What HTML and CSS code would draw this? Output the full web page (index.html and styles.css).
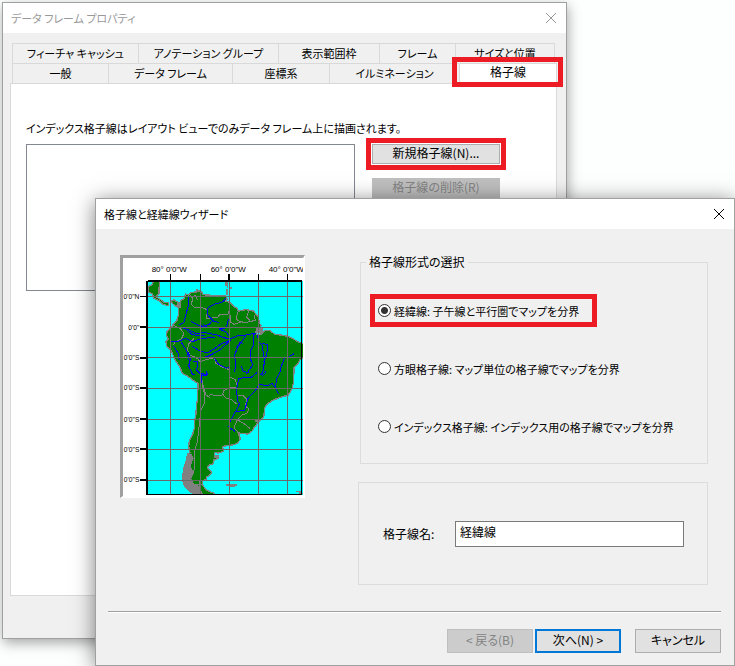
FILE: index.html
```html
<!DOCTYPE html>
<html lang="ja">
<head>
<meta charset="utf-8">
<title>データ フレーム プロパティ</title>
<link rel="stylesheet" href="styles.css">
</head>
<body>
<main class="desktop">
  <section class="window properties">
    <header class="titlebar inactive">
      <span>データ フレーム プロパティ</span>
      <button class="close" aria-label="閉じる"><svg width="12" height="12" viewBox="0 0 12 12"><path d="M1 1L11 11M11 1L1 11"/></svg></button>
    </header>
    <div class="properties-body">
      <div class="tabs" role="tablist">
        <div class="tab-row upper">
          <button class="tab" role="tab">フィーチャ キャッシュ</button>
          <button class="tab" role="tab">アノテーション グループ</button>
          <button class="tab" role="tab">表示範囲枠</button>
          <button class="tab" role="tab">フレーム</button>
          <button class="tab" role="tab">サイズと位置</button>
        </div>
        <div class="tab-row lower">
          <button class="tab" role="tab">一般</button>
          <button class="tab" role="tab">データ フレーム</button>
          <button class="tab" role="tab">座標系</button>
          <button class="tab" role="tab">イルミネーション</button>
          <button class="tab active" role="tab" aria-selected="true">格子線</button>
        </div>
      </div>
      <div class="panel" role="tabpanel">
        <p class="note">インデックス格子線はレイアウト ビューでのみデータ フレーム上に描画されます。</p>
        <div class="grid-list">
          <div class="listbox" role="listbox" aria-label="格子線"></div>
          <div class="actions">
            <div class="marked-button"><button class="button">新規格子線(N)...</button></div>
            <button class="button" disabled>格子線の削除(R)</button>
          </div>
        </div>
      </div>
    </div>
  </section>

  <section class="window wizard">
    <header class="titlebar">
      <span>格子線と経緯線ウィザード</span>
      <button class="close" aria-label="閉じる"><svg width="12" height="12" viewBox="0 0 12 12"><path d="M1 1L11 11M11 1L1 11"/></svg></button>
    </header>
    <form class="wizard-body">
      <div class="content">
        <div class="preview">
          <svg width="180" height="238" viewBox="39 39 540 714" shape-rendering="crispEdges">
            <rect x="39" y="39" width="540" height="714" fill="#fff"/>
            <rect x="110" y="108" width="469" height="642" fill="#0ff"/>
            <g fill="#008000" stroke="#808080" stroke-width="4" stroke-linejoin="bevel">
              <path d="M148 110L147 145L138 155L150 163L163 172L176 174L176 182L158 178L146 166L132 160L128 148L115 140L115 124L126 119L130 110Z"/>
              <path d="M183 168L192 164L203 172L208 180L211 168L224 160L226 147L236 150L243 143L256 143L266 136L274 140L280 149L300 151L320 153L346 153L352 161L347 168L362 173L370 184L380 190L386 198L408 194L430 198L440 210L446 216L447 232L453 242L447 256L436 262L443 270L456 266L466 256L480 257L494 268L512 270L532 274L548 280L562 290L581 296V338L569 345L562 358L552 367L551 410L546 432L535 450L518 455L490 465L475 475L465 486L463 500L461 516L446 530L432 548L426 558L414 567L400 566L385 564L391 582L383 594L368 600L338 604L340 619L326 624L314 623L315 638L327 637L324 641L312 644L310 656L299 660L291 668L298 675L306 680L302 688L290 696L288 703L277 708L279 722L288 734L300 740L313 745L313 748H258L244 742L230 731L221 717L217 698L220 680L224 660L230 646L232 628L240 624L236 604L238 586L248 570L253 550L254 526L258 508L259 484L263 460L264 416L250 406L234 394L216 384L210 366L200 352L190 332L182 315L170 304L168 290L175 284L170 272L171 260L182 250L188 240L200 228L205 212L205 182L197 184L188 176Z"/>
            </g>
            <g fill="#808080">
              <path d="M232 628L244 626L250 640L242 664L252 684L244 700L252 716L270 724L278 746L258 748L230 734L218 716L218 680Z"/>
              <path d="M348 718H382V722H376V726H356V724H348ZM314 631H328V640H314ZM558 738H572V744H579V748H566V742H558ZM252 137H258V132H264V137H275V142H252ZM284 148H300V153H284ZM346 112H354V128H350V122H346ZM348 132H354V150H348ZM358 126H365V132H358ZM436 522H448V532H436ZM438 246H460V264H438ZM202 174H212V188H202Z"/>
            </g>
            <g fill="none" stroke="#808080" stroke-width="3" stroke-linejoin="bevel">
              <path d="M241 150L247 162L245 178L252 186H270M244 158L257 150L262 166M270 186L292 194L290 220L322 218L328 210L354 208L360 188M362 210L360 230L372 238L396 230L402 234L436 226L432 210M384 200L378 222L394 232M416 198L410 216L420 226M190 240L212 252L222 266L214 282L196 290L190 300M252 280L236 296L232 314L240 330L262 340L270 350L272 380L277 412L288 450L300 458M270 350L296 342L314 338L316 354L336 366L358 374L360 396L376 404L382 424M292 456L302 449L320 452L336 450L342 436L358 428L378 426M338 446L346 458L364 464L382 478M384 450H398L410 462L406 484L416 490L412 504L396 510L382 524L372 548L384 562M382 524L402 536L420 550M276 418L284 450L282 478L272 498L270 520L266 556L262 590L254 618L252 640L255 668L244 694M250 719H278M268 704V740M238 590L250 560"/>
              <path d="M240 640H252M236 655H246M240 675H250"/>
            </g>
            <g fill="none" stroke="#00f" stroke-width="3" stroke-linejoin="bevel">
              <path d="M236 152L234 186L226 214L222 232L208 240M346 160L340 170L312 178L294 188L292 208L302 220L310 228L326 232M244 230L264 240L278 244L298 238L306 228M278 238L292 246H312M360 216L352 232L350 248L326 252L348 260L360 278M208 246L234 254L260 266L280 262L320 270L342 278L360 282L388 270H408L436 264M232 256L246 268L266 272L286 270M180 290L202 290L228 280L248 290L270 282L314 276M190 302L204 324L208 346M214 292L230 318L238 348M246 304L270 318L292 324L318 308L334 296L360 286M266 340L294 334L328 316L348 298L364 284M314 340L326 358L350 370L358 366M374 380L378 348L372 334L382 310L406 274M378 310L390 292L400 296M410 386L428 360L420 338L422 316L432 298L430 270L436 264M394 362L398 378L416 384M442 270L446 290L456 300L464 346L458 384L452 390M456 294L474 300L470 330L460 352M234 320L242 342L236 362L248 390L256 388M248 350L264 348L260 376L274 390M288 378L292 388L274 392L274 414M524 336L512 370L512 378L500 400L496 426M552 326L538 334M380 430L386 400L406 398H422L442 382M458 392L468 380M438 434L448 418L472 422L486 416L498 430L506 448M438 434L414 460L404 496L376 500L360 532L356 546L376 560M380 430L382 468L388 476L378 500"/>
              <path d="M274 386H280V390H292"/>
            </g>
            <path d="M181 108V748M271 108V748M358 108V748M445 108V748M532 108V748M113 154H579M113 247H579M113 338H579M113 429H579M113 523H579M113 613H579M113 705H579" fill="none" stroke="#696969" stroke-width="3"/>
            <path d="M113 107H576M111 108V750M108 748H576M181 87V108M271 87V108M357 87V108M445 87V108M532 87V108M90 154H110M90 246H110M90 338H110M90 429H110M90 522H110M90 612H110M90 705H110" fill="none" stroke="#000" stroke-width="5"/>
            <path d="M575 108V750" stroke="#000" stroke-width="3"/>
            <g class="degree longitude">
              <text x="125" y="81">80° 0'0"W</text>
              <text x="302" y="81">60° 0'0"W</text>
              <text x="476" y="81">40° 0'0"W</text>
            </g>
            <g class="degree latitude">
              <text x="88" y="161">0'0"N</text>
              <text x="88" y="254">0'0"</text>
              <text x="88" y="345">0'0"S</text>
              <text x="88" y="436">0'0"S</text>
              <text x="88" y="530">0'0"S</text>
              <text x="88" y="620">0'0"S</text>
              <text x="88" y="712">0'0"S</text>
            </g>
          </svg>
        </div>
        <div class="settings">
          <fieldset class="group types">
            <legend>格子線形式の選択</legend>
            <label class="choice marked"><input type="radio" name="type" checked>経緯線: 子午線と平行圏でマップを分界</label>
            <label class="choice"><input type="radio" name="type">方眼格子線: マップ単位の格子線でマップを分界</label>
            <label class="choice"><input type="radio" name="type">インデックス格子線: インデックス用の格子線でマップを分界</label>
          </fieldset>
          <div class="group naming">
            <label for="grid-name">格子線名:</label>
            <input id="grid-name" type="text" value="経緯線">
          </div>
        </div>
      </div>
      <footer class="footer">
        <button type="button" class="button" disabled>&lt; 戻る(B)</button>
        <button type="button" class="button default">次へ(N) &gt;</button>
        <button type="button" class="button cancel">キャンセル</button>
      </footer>
    </form>
  </section>
</main>
</body>
</html>
```
FILE: styles.css
```css
* {
  box-sizing: border-box;
}

body {
  margin: 0;
  background: #fcfffe;
  color: #000;
  font: 12px/16px "Noto Sans CJK JP", sans-serif;
  font-feature-settings: "palt";
}

button,
input {
  font: inherit;
  font-feature-settings: inherit;
  color: inherit;
}

.desktop {
  position: relative;
  min-height: 100vh;
  padding: 2px 168px 2px 2px;
  overflow: hidden;
}

.window {
  display: flex;
  flex-direction: column;
  border: 1px solid #a0a0a0;
  background: #f0f0f0;
}

.properties {
  min-height: 637px;
  box-shadow: 1px 4px 12px rgba(0, 0, 0, 0.35);
}

.wizard {
  position: absolute;
  top: 198px;
  left: 95px;
  right: 0;
  box-shadow: 0 3px 20px rgba(0, 0, 0, 0.5);
}

.titlebar {
  display: flex;
  align-items: center;
  justify-content: space-between;
  height: 30px;
  padding: 0 9px 0 8px;
  background: #fff;
}

.titlebar,
.tab,
.note,
.choice {
  font-size: 11px;
}

.inactive {
  color: #999;
}

.close {
  display: flex;
  padding: 0;
  border: 0;
  background: none;
}

.close path {
  fill: none;
  stroke: currentColor;
  stroke-width: 1;
}

.properties-body {
  display: flex;
  flex: 1;
  flex-direction: column;
  padding: 10px 9px 42px 7px;
}

.tabs {
  padding-left: 2px;
}

.tab-row {
  display: grid;
  height: 20px;
}

.upper {
  grid-template-columns: 126fr 140fr 101fr 76fr 100fr;
  margin-right: 2px;
}

.lower {
  grid-template-columns: 96fr 124fr 97fr 130fr 98fr;
}

.tab {
  padding: 0 0 2px;
  border: 1px solid #d9d9d9;
  border-width: 1px 0 0 1px;
  background: #f0f0f0;
  white-space: nowrap;
}

.upper .tab:last-child {
  border-right-width: 1px;
}

.active {
  position: relative;
  margin-bottom: -1px;
  border-right-width: 1px;
  padding-bottom: 4px;
  background: #fff;
  font-size: 12px;
}

.active::after {
  content: "";
  position: absolute;
  inset: -7px -7px -3px -8px;
  border: 5px solid #ed1c24;
}

.panel {
  flex: 1;
  padding: 36px 15px;
  border: 1px solid #d9d9d9;
  background: #fff;
}

.note {
  margin: 0 0 8px;
}

.grid-list {
  display: flex;
  align-items: flex-start;
  gap: 11px;
}

.listbox {
  width: 329px;
  height: 147px;
  border: 1px solid #828790;
}

.actions {
  display: flex;
  flex-direction: column;
  align-items: center;
  gap: 8px;
  width: 140px;
  margin-top: -6px;
}

.marked-button {
  padding: 1px;
  border: 5px solid #ed1c24;
}

.button {
  padding: 0 0 2px;
  border: 1px solid #adadad;
  background: #e1e1e1;
  white-space: nowrap;
}

.actions .button {
  display: block;
  width: 128px;
  height: 20px;
  line-height: 16px;
}

.button:disabled {
  border-color: #bfbfbf;
  background: #ccc;
  color: #838383;
}

.actions .button:disabled {
  background: #bfbfbf;
}

.wizard-body {
  padding: 26px 13px 12px 12px;
}

.content {
  display: flex;
  gap: 53px;
  padding: 0 13px 26px 12px;
  border-bottom: 1px solid #a0a0a0;
  box-shadow: 0 1px #fff;
}

.preview {
  align-self: flex-start;
  border: 3px solid;
  border-color: #a0a0a0 #fff #fff #a0a0a0;
  border-right-width: 2px;
  border-bottom-width: 2px;
}

.preview svg {
  display: block;
}

.degree {
  font-family: "Liberation Sans", sans-serif;
}

.longitude {
  font-size: 24px;
}

.latitude {
  font-size: 20px;
  text-anchor: end;
}

.settings {
  flex: 1;
  min-width: 0;
  margin-top: -1px;
}

.group {
  border: 1px solid #dcdcdc;
}

.types {
  display: flex;
  flex-direction: column;
  align-items: flex-start;
  gap: 25px;
  min-width: 0;
  margin: 0 0 18px 2px;
  padding: 24px 9px 20px;
}

.types legend {
  margin-left: -4px;
  padding: 0 3px;
}

.choice {
  display: flex;
  align-items: center;
  height: 33px;
  padding: 0 13px 0 3px;
  border: 5px solid transparent;
  white-space: nowrap;
}

.marked {
  border-color: #ed1c24;
}

.choice input {
  appearance: none;
  width: 13px;
  height: 13px;
  margin: 0 3px 0 0;
  border: 1px solid #333;
  border-radius: 50%;
  background: #fff;
}

.choice input:checked {
  background: radial-gradient(circle, #333 0 3px, #fff 4px);
}

.naming {
  display: flex;
  align-items: center;
  justify-content: space-between;
  height: 103px;
  padding: 0 23px 0 24px;
}

.naming input {
  width: 229px;
  height: 26px;
  padding: 0 4px 5px;
  border: 1px solid #7a7a7a;
  background: #fff;
}

.footer {
  display: flex;
  justify-content: flex-end;
  gap: 2px;
  padding-top: 17px;
}

.footer .button {
  width: 86px;
  height: 24px;
}

.footer .default {
  border: 2px solid #0078d7;
}

.footer .cancel {
  margin-left: 12px;
}
```
